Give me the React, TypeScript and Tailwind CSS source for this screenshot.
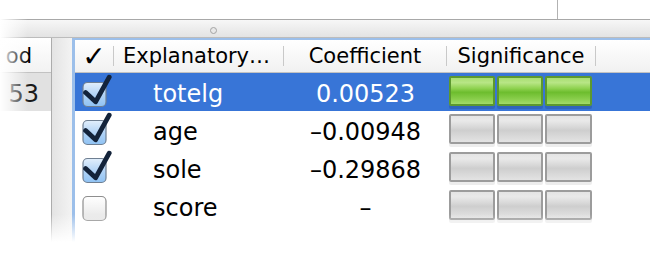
import React from "react";

type Row = { name: string; coef: string; checked: boolean; sig: boolean; selected?: boolean };

const rows: Row[] = [
  { name: "totelg", coef: "0.00523", checked: true, sig: true, selected: true },
  { name: "age", coef: "–0.00948", checked: true, sig: false },
  { name: "sole", coef: "–0.29868", checked: true, sig: false },
  { name: "score", coef: "–", checked: false, sig: false },
];

function CheckBox({ checked }: { checked: boolean }) {
  return (
    <svg width="34" height="38" viewBox="0 0 34 38">
      <defs>
        <linearGradient id="cbOn" x1="0" y1="0" x2="0" y2="1">
          <stop offset="0" stopColor="#e2effc" />
          <stop offset="0.5" stopColor="#b3d4f6" />
          <stop offset="1" stopColor="#8fc2f3" />
        </linearGradient>
        <linearGradient id="cbOff" x1="0" y1="0" x2="0" y2="1">
          <stop offset="0" stopColor="#ffffff" />
          <stop offset="0.5" stopColor="#f2f2f2" />
          <stop offset="1" stopColor="#e4e4e4" />
        </linearGradient>
      </defs>
      <rect
        x="5"
        y="9.5"
        width="23"
        height="24"
        rx="4.5"
        fill={checked ? "url(#cbOn)" : "url(#cbOff)"}
        stroke={checked ? "#6f7f92" : "#8e8e8e"}
        strokeWidth="1.2"
      />
      {checked && (
        <path
          d="M7.6 19.6 L17.6 28.8 L31.2 4.2"
          fill="none"
          stroke="#13233a"
          strokeWidth="4.8"
          strokeLinecap="round"
          strokeLinejoin="round"
        />
      )}
    </svg>
  );
}

function Bar({ on, w }: { on: boolean; w: string }) {
  return (
    <div
      className={
        on
          ? `${w} h-[30px] rounded-[2px] border-2 border-[#5c982f] bg-[linear-gradient(to_bottom,#a9df72_0%,#b8e686_18%,#8fd250_40%,#6dbd2e_55%,#86cc48_78%,#a2db68_100%)] shadow-[0_3px_0_rgba(0,0,0,0.13)]`
          : `${w} h-[30px] rounded-[2px] border-2 border-[#9c9c9c] bg-[linear-gradient(to_bottom,#e4e4e4_0%,#e9e9e9_18%,#dadada_40%,#cecece_55%,#d9d9d9_78%,#e3e3e3_100%)] shadow-[0_3px_0_rgba(0,0,0,0.07)]`
      }
    />
  );
}

function Sep() {
  return <div className="w-px h-[20px] bg-[#c9c9c9] shrink-0" />;
}

export default function App() {
  return (
    <div className="relative w-[650px] h-[256px] overflow-hidden bg-white font-['DejaVu_Sans',sans-serif] text-black">
      {/* top strip */}
      <div className="h-[19px] flex">
        <div className="w-[557px]" />
        <div className="w-px bg-[#b2b2b2]" />
      </div>
      {/* splitter bar */}
      <div className="h-[19px] border-t border-b border-t-[#a8a8a8] border-b-[#bcbcbc] bg-gradient-to-b from-[#f7f7f7] to-[#e3e3e3] flex items-center pt-[3px]">
        <div className="ml-[210px] w-[7px] h-[7px] rounded-full border border-[#a3a3a3] bg-[#e8e8e8]" />
      </div>

      {/* content */}
      <div className="flex h-[218px]">
        {/* left panel */}
        <div className="w-[52px] border-r border-[#acacac] flex flex-col shrink-0">
          <div className="h-[35px] border-b border-[#c2c2c2] bg-gradient-to-b from-white to-[#f2f2f2] text-[21px] leading-[32px] pt-[2px] text-right pr-[19px] whitespace-nowrap overflow-hidden">
            od
          </div>
          <div className="h-[38px] bg-[#e1e1e1] text-[24px] leading-[42px] text-right pr-[12px] text-[#1a1a1a]">
            53
          </div>
        </div>
        {/* gap */}
        <div className="w-[20px] shrink-0 bg-gradient-to-r from-[#e4e4e4] to-[#f3f3f3]" />

        {/* table */}
        <div className="flex-1 flex flex-col border-l-[3px] border-t-[2px] border-[#9cbfea]">
          {/* header */}
          <div className="h-[33px] flex border-b border-[#c2c2c2] bg-gradient-to-b from-white to-[#f1f1f1] text-[21px] leading-[32px]">
            <div className="w-[39px] flex items-center shrink-0">
              <div className="flex-1 text-center text-[28px] font-bold leading-[32px] pt-[1px]">✓</div>
              <Sep />
            </div>
            <div className="w-[170px] flex items-center shrink-0">
              <div className="flex-1 pl-[9px] whitespace-nowrap">Explanatory…</div>
              <Sep />
            </div>
            <div className="w-[163px] flex items-center shrink-0">
              <div className="flex-1 text-center">Coefficient</div>
              <Sep />
            </div>
            <div className="w-[149px] flex items-center shrink-0">
              <div className="flex-1 text-center">Significance</div>
              <Sep />
            </div>
            <div className="flex-1" />
          </div>

          {/* rows */}
          {rows.map((r) => (
            <div
              key={r.name}
              className={`h-[38px] flex ${r.selected ? "bg-[#3875d7] text-white" : ""}`}
            >
              <div className="w-[39px] shrink-0 flex justify-center">
                <CheckBox checked={r.checked} />
              </div>
              <div className="w-[170px] shrink-0 pl-[39px] text-[24px] leading-[42px] whitespace-nowrap">
                {r.name}
              </div>
              <div className="w-[163px] shrink-0 text-center text-[24px] leading-[42px] whitespace-nowrap">
                {r.coef}
              </div>
              <div className="w-[149px] shrink-0 flex items-start pt-[3px] pl-[2px] gap-[2px]">
                <Bar on={r.sig} w="w-[46px]" />
                <Bar on={r.sig} w="w-[46px]" />
                <Bar on={r.sig} w="w-[47px]" />
              </div>
              <div className="flex-1" />
            </div>
          ))}
        </div>
      </div>

      {/* soft edge fades */}
      <div className="pointer-events-none absolute left-0 top-0 h-full w-[28px] bg-gradient-to-r from-white to-transparent" />
      <div className="pointer-events-none absolute left-0 top-[214px] w-full h-[28px] bg-gradient-to-b from-transparent to-white" />
      <div className="pointer-events-none absolute left-0 top-[242px] w-full h-[14px] bg-white" />
    </div>
  );
}
